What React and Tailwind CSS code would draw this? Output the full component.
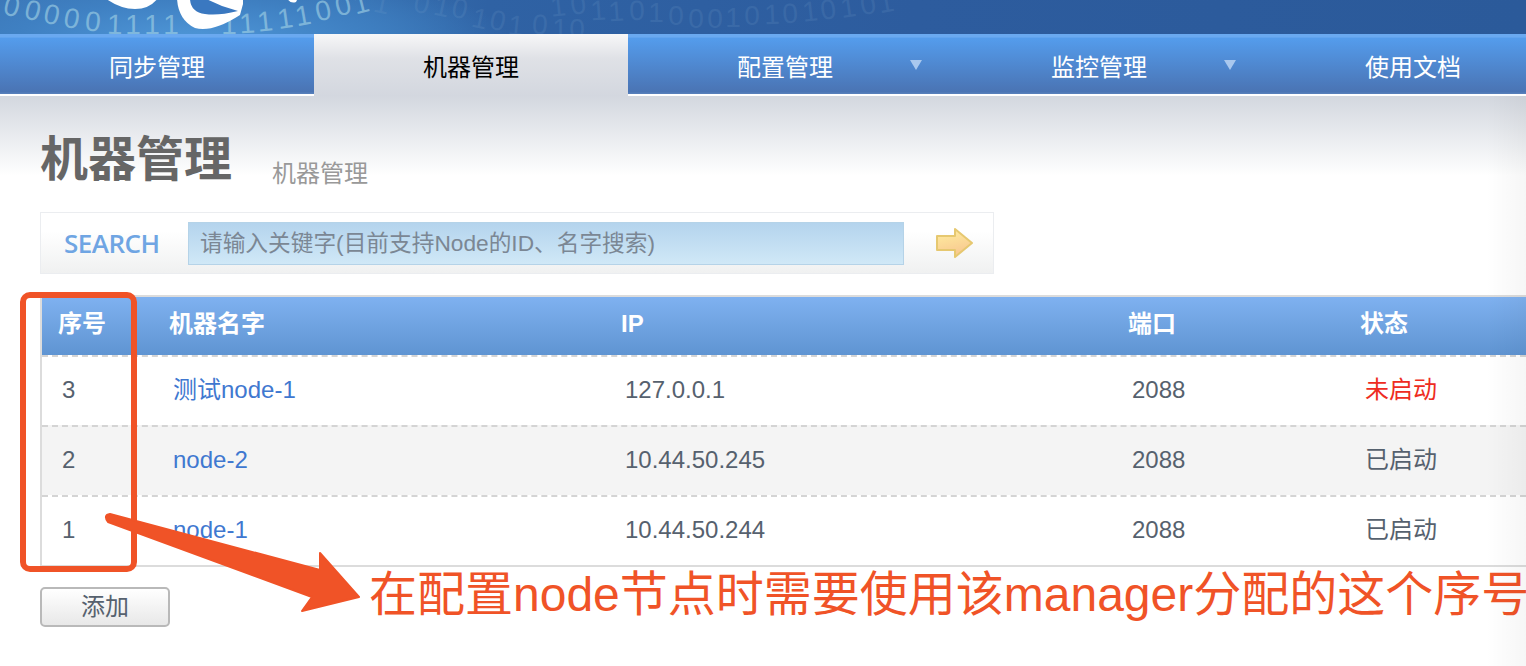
import React from "react";

const navItems = [
  { label: "同步管理" },
  { label: "机器管理", active: true },
  { label: "配置管理", caret: true },
  { label: "监控管理", caret: true },
  { label: "使用文档" },
];

const rows = [
  { id: 3, name: "测试node-1", ip: "127.0.0.1", port: 2088, status: "未启动", off: true },
  { id: 2, name: "node-2", ip: "10.44.50.245", port: 2088, status: "已启动", alt: true },
  { id: 1, name: "node-1", ip: "10.44.50.244", port: 2088, status: "已启动" },
];

const gridCols = "grid grid-cols-[111px_452px_508px_232px_1fr]";

// binary digits of the banner background: [char, x, y, rotation]
const brightDigits = [
  ["0", 12, 6, 14], ["0", 33, 10, 14], ["0", 52, 14, 12], ["0", 72, 18, 10], ["0", 93, 21, 6],
  ["1", 115, 24, 2], ["1", 133, 24, 0], ["1", 152, 24, 0], ["1", 171, 24, 0],
  ["1", 229, 24, 0], ["1", 247, 23, -4], ["1", 265, 21, -6], ["1", 285, 18, -8],
  ["1", 303, 15, -10], ["0", 323, 10, -12], ["0", 343, 5, -14], ["1", 361, 3, -14],
];

const fadedDigits = [
  ["1", 382, 3, 12], ["0", 422, 3, 12], ["1", 442, 6, 12], ["0", 460, 8, 12],
  ["1", 480, 18, 12], ["0", 498, 20, 12], ["1", 516, 25, 6], ["0", 540, 24, 4], ["1", 560, 28, 0],
  ["1", 558, 6, -6], ["0", 578, 4, -8],
  ["1", 598, 10, -4], ["0", 577, 28, 0], ["1", 616, 11, -4], ["0", 637, 10, -2], ["1", 656, 12, 0],
  ["0", 676, 15, 0], ["0", 696, 18, 0], ["0", 715, 18, 0], ["1", 733, 17, 0], ["0", 752, 15, 0],
  ["1", 772, 14, -2], ["0", 790, 13, -4], ["1", 810, 11, -6], ["0", 828, 9, -8], ["1", 848, 7, -8],
  ["0", 868, 4, -10], ["1", 886, 2, -10],
];

function Banner() {
  return (
    <div className="relative h-[34px] overflow-hidden bg-[radial-gradient(ellipse_320px_70px_at_190px_40px,#4f97d8_0%,#3f80c2_55%,rgba(52,108,172,0)_100%),linear-gradient(90deg,#3a74b4_0%,#3670b0_22%,#2f62a4_32%,#2d5c9e_60%,#2b5a9a_100%)]">
      <svg width="1526" height="34" className="block">
        <g fontFamily="'Liberation Sans', sans-serif" fontSize="28" textAnchor="middle">
          {brightDigits.map(([ch, x, y, r]) => (
            <text key={`${x}-${y}`} x={x} y={y + 10} fill="#a4d4e6" opacity="0.6" transform={`rotate(${r} ${x} ${y})`}>
              {ch}
            </text>
          ))}
          {fadedDigits.map(([ch, x, y, r]) => (
            <text key={`${x}-${y}`} x={x} y={y + 10} fill="#86aed4" opacity="0.14" transform={`rotate(${r} ${x} ${y})`}>
              {ch}
            </text>
          ))}
        </g>
        <path d="M105 -2 Q120 9 135 9 Q150 9 158 -2 Z" fill="#fff" />
        <path d="M177 -2 Q178 20 195 28 Q212 33 240 15 L243 4 L243 -2 Z" fill="#fff" />
        <path d="M190 -2 Q190 12 205 14 Q218 16 238 11 L222 6 L204 -2 Z" fill="#3a78c0" />
        <path d="M287 -2 Q290 4 296 2 L298 -2 Z" fill="#fff" />
      </svg>
    </div>
  );
}

function NavBar() {
  return (
    <div className="grid h-[62px] grid-cols-[repeat(5,314px)] border-b-2 border-white bg-[linear-gradient(180deg,#6aa9f0_0%,#6aa9f0_5%,#549cec_7%,#4a74b4_96%,#5a82bc_100%)]">
      {navItems.map((item) => (
        <div
          key={item.label}
          className={
            item.active
              ? "relative flex h-[62px] items-center justify-center bg-[linear-gradient(180deg,#f7f7f8_0%,#dfe1e6_40%,#d3d7df_100%)] pt-[6px] text-[24px] text-black"
              : "relative flex items-center justify-center pt-[6px] text-[24px] text-white"
          }
        >
          {item.label}
          {item.caret && (
            <span className="absolute left-[282px] top-[26px] h-0 w-0 border-x-[6px] border-t-[10px] border-x-transparent border-t-[#a9c8ee]" />
          )}
        </div>
      ))}
    </div>
  );
}

function SearchBar() {
  return (
    <div className="flex h-[62px] w-[954px] items-center border border-[#ebedf0] bg-[linear-gradient(180deg,#ffffff_30%,#f0f1f1_100%)]">
      <span className="ml-[23px] w-[124px] text-[26px] font-semibold text-[#6fa5e3] [font-family:'Open_Sans',sans-serif] tracking-[-0.5px]">
        SEARCH
      </span>
      <div className="flex h-[43px] w-[716px] items-center border border-[#b5d3e8] bg-[linear-gradient(180deg,#b4d4ed_0%,#d0e8f7_100%)] pl-[11px] text-[22.7px] text-[#7b8794]">
        请输入关键字(目前支持Node的ID、名字搜索)
      </div>
      <svg width="40" height="32" viewBox="0 0 40 32" className="ml-[31px]">
        <defs>
          <linearGradient id="arrowFill" x1="0" y1="0" x2="0.3" y2="1">
            <stop offset="0" stopColor="#fff0a0" />
            <stop offset="1" stopColor="#f8c890" />
          </linearGradient>
        </defs>
        <path
          d="M2 9 H20 V2 L37 16 L20 30 V23 H2 Z"
          fill="url(#arrowFill)"
          stroke="#e6c870"
          strokeWidth="2"
          strokeLinejoin="round"
        />
      </svg>
    </div>
  );
}

function MachineTable() {
  return (
    <div className="mt-[21px] border-y-2 border-l-2 border-[#dcdcdc]">
      <div className={`${gridCols} h-[58px] items-center bg-[linear-gradient(180deg,#7fb1f0_0%,#5f94d2_100%)] pb-[4px] text-[24px] font-bold text-white`}>
        <div className="pl-[16px]">序号</div>
        <div className="pl-[16px]">机器名字</div>
        <div className="pl-[16px]">IP</div>
        <div className="pl-[15px]">端口</div>
        <div className="pl-[15px]">状态</div>
      </div>
      {rows.map((row) => (
        <div
          key={row.id}
          className={`${gridCols} h-[70px] items-center border-t-2 border-dashed border-[#d4d4d4] pb-[2px] text-[24px] text-[#56616e] ${
            row.alt ? "bg-[#f4f4f4]" : "bg-white"
          }`}
        >
          <div className="pl-[20px]">{row.id}</div>
          <div className="pl-[20px] text-[#3f78d0]">{row.name}</div>
          <div className="pl-[20px]">{row.ip}</div>
          <div className="pl-[19px]">{row.port}</div>
          <div className={row.off ? "pl-[20px] text-[#ee2c22]" : "pl-[20px]"}>{row.status}</div>
        </div>
      ))}
    </div>
  );
}

export default function App() {
  return (
    <div className="relative h-[666px] w-[1526px] overflow-hidden bg-white [font-family:'Liberation_Sans','Noto_Sans_CJK_SC',sans-serif]">
      <Banner />
      <NavBar />
      <div className="bg-[linear-gradient(180deg,#d3d7df_0px,#ffffff_80px)] pl-[40px] pt-[34px]">
        <div className="flex h-[60px] items-center">
          <h1 className="text-[48px] font-bold text-[#666666]">机器管理</h1>
          <span className="ml-[40px] mt-[28px] text-[24px] text-[#999999]">机器管理</span>
        </div>
        <div className="mt-[22px]">
          <SearchBar />
        </div>
        <MachineTable />
        <button className="mt-[20px] flex h-[40px] w-[130px] items-center justify-center rounded-[5px] border-2 border-[#b9b9b9] bg-[linear-gradient(180deg,#ffffff_0%,#e8e8e8_100%)] text-[24px] text-[#56616e]">
          添加
        </button>
      </div>

      {/* annotation drawn over the page */}
      <div className="absolute left-[20px] top-[292px] h-[280px] w-[117px] rounded-[10px] border-[6px] border-[#f05327]" />
      <svg width="400" height="140" className="absolute left-0 top-[500px]">
        <path
          d="M110 14 L320 70 L320 53 L359 97 L302 111 L312 97 L108 22 Q103 15 110 14 Z"
          fill="#f05327"
          stroke="#f05327"
          strokeWidth="2"
          strokeLinejoin="round"
        />
      </svg>
      <div className="absolute left-[369px] top-[567px] whitespace-nowrap text-[48px] leading-[56px] text-[#f05327]">
        在配置node节点时需要使用该manager分配的这个序号
      </div>
      <div className="absolute right-0 top-[96px] h-[570px] w-[40px] bg-[linear-gradient(90deg,rgba(0,0,0,0),rgba(0,0,0,0.035))]" />
    </div>
  );
}
